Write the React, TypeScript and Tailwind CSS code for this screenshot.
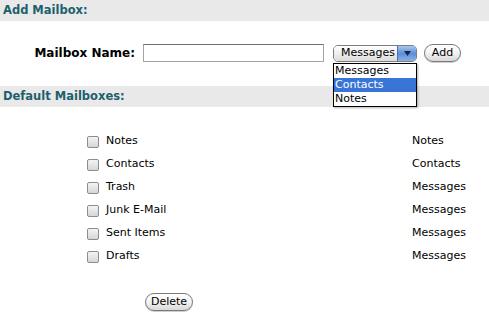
const font = { fontFamily: '"DejaVu Sans", Verdana, sans-serif' };

const mailboxes = [
  { name: "Notes", type: "Notes" },
  { name: "Contacts", type: "Contacts" },
  { name: "Trash", type: "Messages" },
  { name: "Junk E-Mail", type: "Messages" },
  { name: "Sent Items", type: "Messages" },
  { name: "Drafts", type: "Messages" },
];

const SectionBar = ({ title }: { title: string }) => (
  <div className="h-[21px] bg-[#e9e9e9] pl-[3px] flex items-center text-[11.5px] font-bold text-[#1e5f6c]">
    {title}
  </div>
);

const Checkbox = () => (
  <div className="w-[12px] h-[12px] rounded-[2px] border border-[#8d8d8d] bg-gradient-to-b from-[#f4f4f4] to-[#d6d6d6] shrink-0" />
);

const PillButton = ({ label, className }: { label: string; className?: string }) => (
  <div
    className={
      "h-[18px] rounded-full border border-[#7a7a7a] bg-gradient-to-b from-white via-[#f2f2f2] to-[#d9d9d9] flex items-center justify-center text-[11px] text-black shadow-[0_1px_0_#cfcfcf] " +
      (className ?? "")
    }
  >
    {label}
  </div>
);

export default function App() {
  return (
    <div className="w-[489px] h-[321px] bg-white relative text-black" style={font}>
      <SectionBar title="Add Mailbox:" />

      <div className="flex items-center h-[18px] mt-[23px]">
        <div className="w-[136px] text-right pr-[1px] text-[12px] font-bold">Mailbox Name:</div>
        <div className="ml-[7px] w-[181px] h-[18px] border border-[#a5a5a5] border-t-[#6f6f6f] bg-white" />
        <div className="ml-[9px] w-[84px] h-[17px] rounded-[5px] border border-[#7d7d7d] flex overflow-hidden">
          <div className="flex-1 bg-gradient-to-b from-white to-[#dcdcdc] flex items-center pl-[7px] text-[11px]">
            Messages
          </div>
          <div className="w-[19px] bg-gradient-to-b from-[#a9c6ee] via-[#5b8fd8] to-[#8ab2ea] border-l border-[#4b6fa5] flex items-center justify-center">
            <svg width="7" height="5" viewBox="0 0 7 5">
              <path d="M0 0 L7 0 L3.5 5 Z" fill="#1c2a40" />
            </svg>
          </div>
        </div>
        <PillButton label="Add" className="ml-[7px] w-[37px]" />
      </div>

      <div className="mt-[24px]">
        <SectionBar title="Default Mailboxes:" />
      </div>

      <div className="mt-[23px]">
        {mailboxes.map((m) => (
          <div key={m.name} className="flex items-center h-[23px] pl-[87px] text-[11px]">
            <Checkbox />
            <div className="flex-1 ml-[7px]">{m.name}</div>
            <div className="w-[77px]">{m.type}</div>
          </div>
        ))}
      </div>

      <div className="mt-[25px] pl-[145px]">
        <PillButton label="Delete" className="w-[48px]" />
      </div>

      <div className="absolute left-[333px] top-[63px] w-[84px] border border-black bg-white text-[11px] leading-[14px] shadow-[1px_1px_2px_rgba(0,0,0,0.3)]">
        <div className="pl-[1px]">Messages</div>
        <div className="pl-[1px] bg-[#3875d7] text-white">Contacts</div>
        <div className="pl-[1px]">Notes</div>
      </div>
    </div>
  );
}
